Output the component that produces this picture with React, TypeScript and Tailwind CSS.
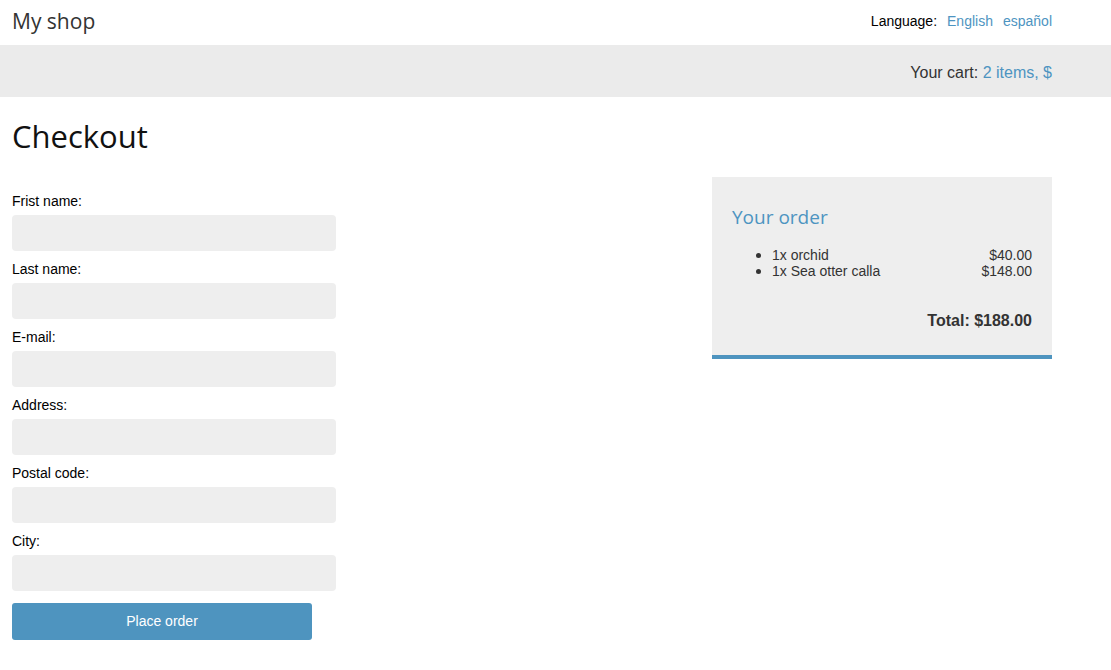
import React from 'react';

const fields = ['Frist name:', 'Last name:', 'E-mail:', 'Address:', 'Postal code:', 'City:'];

const items = [
  { name: '1x orchid', price: '$40.00' },
  { name: '1x Sea otter calla', price: '$148.00' },
];

export default function App() {
  return (
    <div className="min-h-[670px] w-full bg-white text-[#333] [font-family:'Liberation_Sans',Arial,sans-serif]">
      {/* Header */}
      <div className="h-[45px] px-[12px]">
        <div className="w-[1040px] h-full flex items-center justify-between">
          <a className="text-[21px] text-[#333] [font-family:'Open_Sans',sans-serif] -mt-[1px]">My shop</a>
          <div className="flex items-center text-[14px] text-black -mt-[3px]">
            <span>Language:</span>
            <a className="ml-[10px] text-[#4d94c1]">English</a>
            <a className="ml-[10px] text-[#4d94c1]">español</a>
          </div>
        </div>
      </div>

      {/* Cart bar */}
      <div className="h-[52px] bg-[#ebebeb] px-[12px]">
        <div className="w-[1040px] h-full flex items-center justify-end text-[16px] pt-[3px]">
          <span className="text-[#333]">Your cart:&nbsp;</span>
          <a className="text-[#4d94c1]">2 items, $</a>
        </div>
      </div>

      {/* Content */}
      <div className="px-[12px]">
        <div className="w-[1040px]">
          <h1 className="text-[31px] text-[#111] [font-family:'Open_Sans',sans-serif] pt-[17px] leading-[44px]">Checkout</h1>
          <div className="flex justify-between mt-[19px]">
            <form className="w-[324px] pt-[16px]">
              {fields.map((f) => (
                <div key={f} className="mb-[10px]">
                  <label className="block text-[14px] leading-[16px] text-black mb-[6px]">{f}</label>
                  <input className="block w-[324px] h-[36px] rounded-[4px] bg-[#eeeeee] border-0 outline-none" />
                </div>
              ))}
              <button
                type="button"
                className="mt-[2px] w-[300px] h-[37px] rounded-[3px] bg-[#4e94bf] text-white text-[14px]"
              >
                Place order
              </button>
            </form>

            <div className="w-[340px] self-start bg-[#eeeeee] border-b-[4px] border-[#4e94bf] px-[20px] pt-[28px] pb-[22px]">
              <h3 className="text-[19px] leading-[24px] text-[#4d94c1] [font-family:'Open_Sans',sans-serif]">Your order</h3>
              <ul className="mt-[18px] pl-[40px] text-[14px] leading-[16px] text-[#333]">
                {items.map((it) => (
                  <li key={it.name} className="flex justify-between relative">
                    <span className="absolute -left-[16px] top-[6px] w-[5px] h-[5px] rounded-full bg-[#333]" />
                    <span>{it.name}</span>
                    <span>{it.price}</span>
                  </li>
                ))}
              </ul>
              <p className="mt-[30px] text-right text-[16px] font-bold text-[#333]">Total: $188.00</p>
            </div>
          </div>
        </div>
      </div>
    </div>
  );
}
